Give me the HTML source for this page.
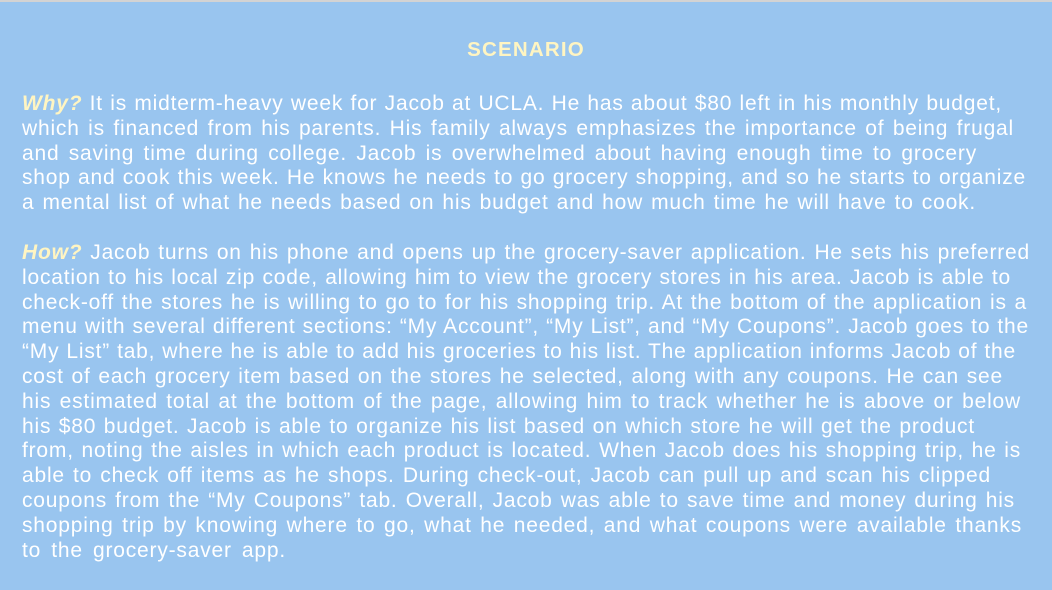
<!DOCTYPE html>
<html><head><meta charset="utf-8"><style>
html,body{margin:0;padding:0;}
body{width:1052px;height:590px;background:#99c5ef;border-top:2px solid #d3d3d3;box-sizing:border-box;font-family:"Liberation Sans",sans-serif;color:#fff;overflow:hidden;position:relative;}
h1{position:absolute;top:36px;left:0;width:1052px;text-align:center;margin:0;font-size:20.5px;font-weight:bold;color:#fff5c2;letter-spacing:1.2px;}
.p{position:absolute;left:22px;font-size:21px;line-height:24.8px;letter-spacing:0.8px;white-space:nowrap;}
.p div{height:24.8px;text-align:justify;text-align-last:justify;}
b{color:#fff5c2;font-style:italic;}
</style></head><body>
<h1>SCENARIO</h1>
<div class="p" style="top:90px">
<div style="width:980px"><b>Why?</b> It is midterm-heavy week for Jacob at UCLA. He has about $80 left in his monthly budget,</div>
<div style="width:992px">which is financed from his parents. His family always emphasizes the importance of being frugal</div>
<div style="width:955px">and saving time during college. Jacob is overwhelmed about having enough time to grocery</div>
<div style="width:1004px">shop and cook this week. He knows he needs to go grocery shopping, and so he starts to organize</div>
<div style="width:954px">a mental list of what he needs based on his budget and how much time he will have to cook.</div>
</div>
<div class="p" style="top:239px">
<div style="width:1008px"><b>How?</b> Jacob turns on his phone and opens up the grocery-saver application. He sets his preferred</div>
<div style="width:989px">location to his local zip code, allowing him to view the grocery stores in his area. Jacob is able to</div>
<div style="width:1005px">check-off the stores he is willing to go to for his shopping trip. At the bottom of the application is a</div>
<div style="width:1007px">menu with several different sections: “My Account”, “My List”, and “My Coupons”. Jacob goes to the</div>
<div style="width:994px">“My List” tab, where he is able to add his groceries to his list. The application informs Jacob of the</div>
<div style="width:981px">cost of each grocery item based on the stores he selected, along with any coupons. He can see</div>
<div style="width:999px">his estimated total at the bottom of the page, allowing him to track whether he is above or below</div>
<div style="width:953px">his $80 budget. Jacob is able to organize his list based on which store he will get the product</div>
<div style="width:999px">from, noting the aisles in which each product is located. When Jacob does his shopping trip, he is</div>
<div style="width:969px">able to check off items as he shops. During check-out, Jacob can pull up and scan his clipped</div>
<div style="width:993px">coupons from the “My Coupons” tab. Overall, Jacob was able to save time and money during his</div>
<div style="width:1000px">shopping trip by knowing where to go, what he needed, and what coupons were available thanks</div>
<div style="width:264px">to the grocery-saver app.</div>
</div>
</body></html>
